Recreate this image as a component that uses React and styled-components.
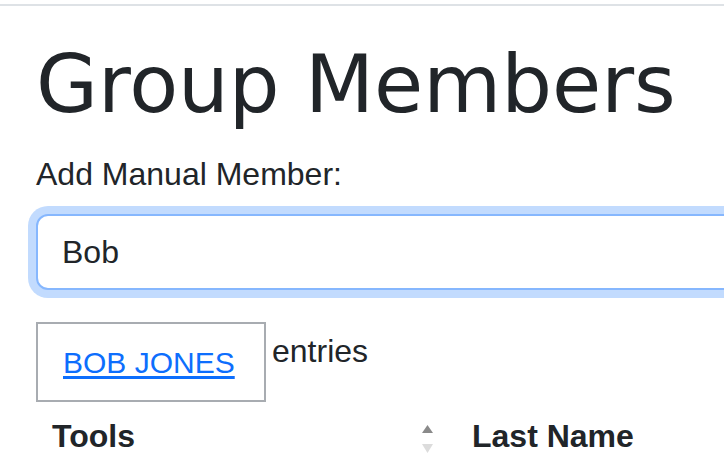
import styled, { createGlobalStyle } from "styled-components";

const GlobalStyle = createGlobalStyle`
  body {
    margin: 0;
    background: #fff;
    color: #212529;
    font-family: "Liberation Sans", Arial, sans-serif;
    overflow: hidden;
  }
`;

const TopRule = styled.div`
  margin-top: 4px;
  height: 2px;
  background: #dee2e6;
`;

const Container = styled.div`
  width: 1200px;
  padding: 31px 36px 0;
  box-sizing: border-box;
`;

const Title = styled.h1`
  margin: 0 0 17px;
  font-family: "DejaVu Sans", sans-serif;
  font-size: 80px;
  line-height: 96px;
  font-weight: 400;
  color: #212529;
`;

const Label = styled.label`
  display: block;
  margin-bottom: 16px;
  font-size: 32px;
  line-height: 48px;
`;

const SearchWrap = styled.div`
  position: relative;
`;

const SearchInput = styled.input`
  display: block;
  width: 100%;
  height: 76px;
  box-sizing: border-box;
  padding: 12px 24px;
  font-family: inherit;
  font-size: 32px;
  line-height: 48px;
  color: #212529;
  background: #fff;
  border: 2px solid #86b7fe;
  border-radius: 12px;
  box-shadow: 0 0 0 8px rgba(13, 110, 253, 0.25);
  outline: none;
`;

const Suggestions = styled.ul`
  position: absolute;
  top: 108px;
  left: 0;
  z-index: 5;
  width: 230px;
  box-sizing: border-box;
  margin: 0;
  padding: 0;
  list-style: none;
  background: #fff;
  border: 2px solid #a8acb1;
`;

const Suggestion = styled.li`
  padding: 16px 20px 10px 25px;
  line-height: 45px;
`;

const SuggestionLink = styled.a`
  font-size: 30px;
  color: #0d6efd;
  text-decoration: underline;
  text-underline-offset: 3px;
`;

const LengthRow = styled.div`
  display: flex;
  align-items: center;
  height: 48px;
  margin-top: 37px;
  padding-left: 236px;
  font-size: 32px;
  line-height: 48px;
`;

const Table = styled.table`
  margin-top: 21px;
  border-collapse: collapse;
  table-layout: fixed;
  width: 820px;
`;

const Th = styled.th`
  padding: 16px ${(p) => (p.$sortable ? "23px" : "16px")} 16px 16px;
  font-size: 32px;
  line-height: 48px;
  font-weight: 700;
  text-align: left;
  color: #212529;
`;

const ThInner = styled.div`
  display: flex;
  justify-content: space-between;
  align-items: flex-start;
`;

const SortIcon = styled.svg`
  margin-top: 13px;
  flex: none;
`;

function SortArrows() {
  return (
    <SortIcon width="11" height="28" viewBox="0 0 11 28">
      <path d="M0 8 L5.5 0 L11 8 Z" fill="#8a8a8a" />
      <path d="M0 19 L11 19 L5.5 28 Z" fill="#dcdcdc" />
    </SortIcon>
  );
}

export default function App() {
  return (
    <>
      <GlobalStyle />
      <TopRule />
      <Container>
        <Title>Group Members</Title>
        <Label htmlFor="member">Add Manual Member:</Label>
        <SearchWrap>
          <SearchInput id="member" defaultValue="Bob" />
          <Suggestions>
            <Suggestion>
              <SuggestionLink href="#">BOB JONES</SuggestionLink>
            </Suggestion>
          </Suggestions>
        </SearchWrap>
        <LengthRow>entries</LengthRow>
        <Table>
          <colgroup>
            <col style={{ width: 420 }} />
            <col style={{ width: 400 }} />
          </colgroup>
          <thead>
            <tr>
              <Th $sortable>
                <ThInner>
                  Tools
                  <SortArrows />
                </ThInner>
              </Th>
              <Th $sortable>
                <ThInner>
                  Last Name
                  <SortArrows />
                </ThInner>
              </Th>
            </tr>
          </thead>
        </Table>
      </Container>
    </>
  );
}
